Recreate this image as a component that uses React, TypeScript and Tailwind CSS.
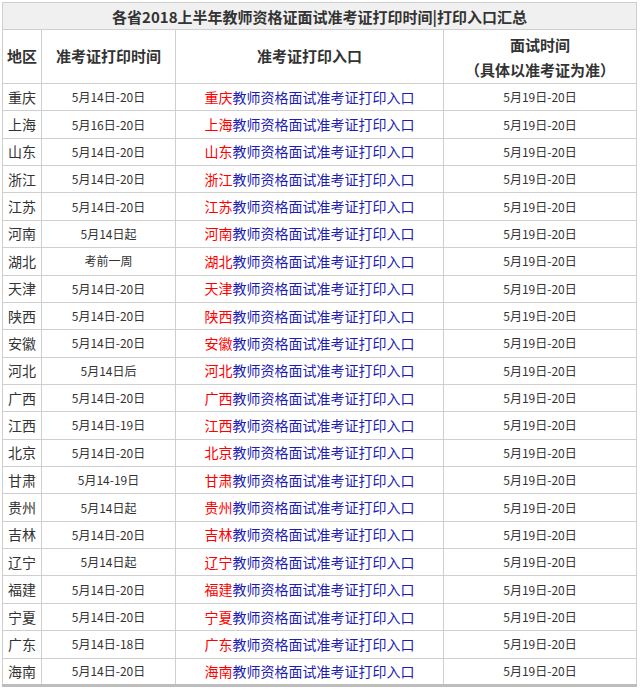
import React from "react";

type Row = { region: string; print: string; interview: string };

const rows: Row[] = [
  { region: "重庆", print: "5月14日-20日", interview: "5月19日-20日" },
  { region: "上海", print: "5月16日-20日", interview: "5月19日-20日" },
  { region: "山东", print: "5月14日-20日", interview: "5月19日-20日" },
  { region: "浙江", print: "5月14日-20日", interview: "5月19日-20日" },
  { region: "江苏", print: "5月14日-20日", interview: "5月19日-20日" },
  { region: "河南", print: "5月14日起", interview: "5月19日-20日" },
  { region: "湖北", print: "考前一周", interview: "5月19日-20日" },
  { region: "天津", print: "5月14日-20日", interview: "5月19日-20日" },
  { region: "陕西", print: "5月14日-20日", interview: "5月19日-20日" },
  { region: "安徽", print: "5月14日-20日", interview: "5月19日-20日" },
  { region: "河北", print: "5月14日后", interview: "5月19日-20日" },
  { region: "广西", print: "5月14日-20日", interview: "5月19日-20日" },
  { region: "江西", print: "5月14日-19日", interview: "5月19日-20日" },
  { region: "北京", print: "5月14日-20日", interview: "5月19日-20日" },
  { region: "甘肃", print: "5月14-19日", interview: "5月19日-20日" },
  { region: "贵州", print: "5月14日起", interview: "5月19日-20日" },
  { region: "吉林", print: "5月14日-20日", interview: "5月19日-20日" },
  { region: "辽宁", print: "5月14日起", interview: "5月19日-20日" },
  { region: "福建", print: "5月14日-20日", interview: "5月19日-20日" },
  { region: "宁夏", print: "5月14日-20日", interview: "5月19日-20日" },
  { region: "广东", print: "5月14日-18日", interview: "5月19日-20日" },
  { region: "海南", print: "5月14日-20日", interview: "5月19日-20日" },
];

const cell = "border border-[#cfcfcf] text-center align-middle p-0";

export default function App() {
  return (
    <div
      className="w-[640px] h-[690px] bg-white overflow-hidden pt-[2px] pl-[2px] text-[#333]"
      style={{ fontFamily: '"Noto Sans CJK SC", "Noto Sans", sans-serif' }}
    >
      <table className="w-[634px] border-collapse table-fixed border-b-[3px] border-b-[#bdbdbd]">
        <colgroup>
          <col className="w-[39px]" />
          <col className="w-[134px]" />
          <col className="w-[268px]" />
          <col className="w-[193px]" />
        </colgroup>
        <thead>
          <tr className="h-[27px] bg-[#f0f0f0]">
            <th colSpan={4} className={`${cell} text-[15px] font-bold leading-none`}>
              各省2018上半年教师资格证面试准考证打印时间|打印入口汇总
            </th>
          </tr>
          <tr className="h-[54px]">
            <th className={`${cell} text-[15px] font-bold`}>地区</th>
            <th className={`${cell} text-[15px] font-bold`}>准考证打印时间</th>
            <th className={`${cell} text-[15px] font-bold`}>准考证打印入口</th>
            <th className={`${cell} text-[15px] font-bold leading-[25px]`}>
              <div>面试时间</div>
              <div>（具体以准考证为准）</div>
            </th>
          </tr>
        </thead>
        <tbody>
          {rows.map((r) => (
            <tr key={r.region} className="h-[27.36px]">
              <td className={`${cell} text-[14px]`}>{r.region}</td>
              <td className={`${cell} text-[12px]`}>{r.print}</td>
              <td className={`${cell} text-[14px]`}>
                <span className="text-[#ff0000]">{r.region}</span>
                <span className="text-[#1c1cb4]">教师资格面试准考证打印入口</span>
              </td>
              <td className={`${cell} text-[12px]`}>{r.interview}</td>
            </tr>
          ))}
        </tbody>
      </table>
    </div>
  );
}
